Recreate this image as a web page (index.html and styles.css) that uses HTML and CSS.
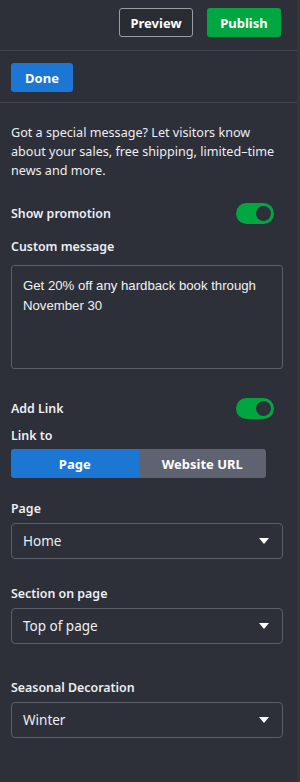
FILE: index.html
```html
<!DOCTYPE html>
<html lang="en">
<head>
    <meta charset="UTF-8">
    <title>Promotion banner</title>
    <link rel="stylesheet" href="styles.css">
</head>
<body>
    <div class="panel">
        <div class="topbar">
            <button class="btn btn-outline">Preview</button>
            <button class="btn btn-green">Publish</button>
        </div>
        <div class="donebar">
            <button class="btn btn-blue">Done</button>
        </div>
        <div class="content">
            <p class="intro">Got a special message? Let visitors know about your sales, free shipping, limited–time news and more.</p>

            <div class="switch-row first">
                <span class="label">Show promotion</span>
                <span class="toggle"><span class="knob"></span></span>
            </div>

            <div class="label msg-label">Custom message</div>
            <div class="textbox">Get 20% off any hardback book through November 30</div>

            <div class="switch-row link-row">
                <span class="label">Add Link</span>
                <span class="toggle"><span class="knob"></span></span>
            </div>

            <div class="label linkto-label">Link to</div>
            <div class="segmented">
                <span class="seg active">Page</span>
                <span class="seg">Website URL</span>
            </div>

            <div class="label field-label page-label">Page</div>
            <div class="select">
                <span>Home</span>
                <svg width="12" height="8" viewBox="0 0 12 8"><path d="M1 1h10L6 7z" fill="#fff"/></svg>
            </div>

            <div class="label field-label section-label">Section on page</div>
            <div class="select">
                <span>Top of page</span>
                <svg width="12" height="8" viewBox="0 0 12 8"><path d="M1 1h10L6 7z" fill="#fff"/></svg>
            </div>

            <div class="label field-label season-label">Seasonal Decoration</div>
            <div class="select">
                <span>Winter</span>
                <svg width="12" height="8" viewBox="0 0 12 8"><path d="M1 1h10L6 7z" fill="#fff"/></svg>
            </div>
        </div>
    </div>
</body>
</html>
```

FILE: styles.css
```css
body {
    margin: 0;
    background-color: #2e3039;
    color: #eceef2;
    font-family: 'Noto Sans', sans-serif;
}
.panel {
    width: 300px;
    min-height: 782px;
    box-sizing: border-box;
    border-right: 3px solid #33363f;
}
.btn {
    font-family: 'Noto Sans', sans-serif;
    font-size: 13px;
    font-weight: 700;
    color: #fff;
    border-radius: 3px;
    border: 0;
    height: 29px;
    padding: 0;
}
.btn-outline {
    width: 74px;
    background: #2a2c34;
    border: 1px solid #9a9ca4;
}
.btn-green {
    width: 74px;
    background: #00a63f;
}
.btn-blue {
    width: 62px;
    background: #1b76d4;
}
.topbar {
    display: flex;
    justify-content: flex-end;
    gap: 14px;
    padding: 8px 16px 13px 0;
    border-bottom: 1px solid #43464f;
}
.donebar {
    padding: 12px 11px 10px;
    border-bottom: 1px solid #43464f;
}
.donebar .btn {
    display: block;
}
.content {
    padding: 0 14px 0 11px;
}
.intro {
    margin: 20px 0 0;
    font-size: 12.6px;
    line-height: 19px;
}
.label {
    font-size: 12.4px;
    font-weight: 600;
    line-height: 18px;
}
.switch-row {
    display: flex;
    justify-content: space-between;
    align-items: center;
    padding-right: 9px;
}
.switch-row.first {
    margin-top: 23px;
}
.switch-row.link-row {
    margin-top: 29px;
}
.toggle {
    width: 38px;
    height: 21px;
    border-radius: 11px;
    background: #00a63f;
    display: flex;
    align-items: center;
    justify-content: flex-end;
    padding-right: 3px;
    box-sizing: border-box;
}
.knob {
    width: 15px;
    height: 15px;
    border-radius: 50%;
    background: #2e3039;
}
.msg-label {
    margin-top: 14px;
}
.textbox {
    margin-top: 9px;
    height: 104px;
    box-sizing: border-box;
    border: 1px solid #5b5e69;
    border-radius: 3px;
    padding: 10px 11px;
    font-family: 'Liberation Sans', sans-serif;
    font-size: 13.2px;
    line-height: 20px;
    color: #f2f2f2;
}
.linkto-label {
    margin-top: 8px;
}
.segmented {
    display: flex;
    width: 255px;
    height: 29px;
    margin-top: 4px;
    border-radius: 3px;
    overflow: hidden;
}
.seg {
    flex: 1;
    display: flex;
    align-items: center;
    justify-content: center;
    font-size: 13px;
    font-weight: 700;
    background: #5f6271;
    color: #fff;
}
.seg.active {
    background: #1b76d4;
}
.page-label {
    margin-top: 22px;
}
.section-label {
    margin-top: 26px;
}
.season-label {
    margin-top: 35px;
}
.select {
    margin-top: 5px;
    height: 36px;
    box-sizing: border-box;
    border: 1px solid #5b5e69;
    border-radius: 4px;
    display: flex;
    align-items: center;
    justify-content: space-between;
    padding: 0 12px 0 11px;
    font-size: 13.5px;
}
```
